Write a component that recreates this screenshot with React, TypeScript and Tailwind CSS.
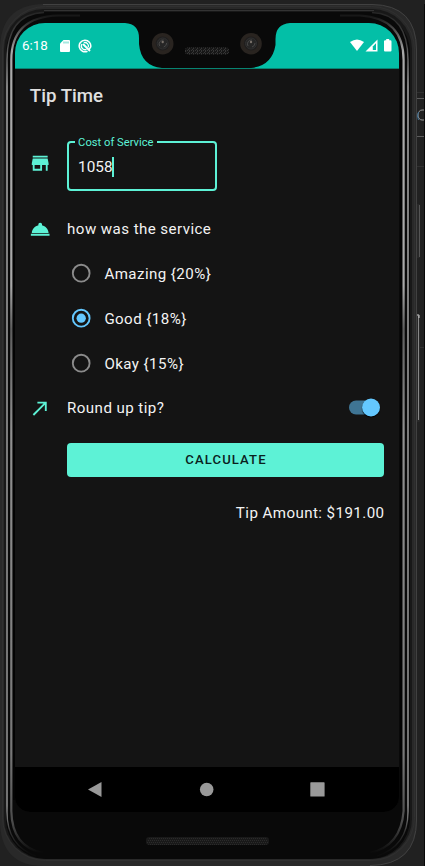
import { useState } from "react";

const ICONS = {
  store: "M20 4H4v2h16V4zm1 10v-2l-1-5H4l-1 5v2h1v6h10v-6h4v6h2v-6h1zm-9 4H6v-4h6v4z",
  service:
    "M2 17h20v2H2zm11.84-9.21A2.006 2.006 0 0 0 12 5a2.006 2.006 0 0 0-1.84 2.79C6.25 8.6 3.27 11.93 3 16h18c-.27-4.07-3.25-7.4-7.16-8.21z",
  arrow: "M9 5v2h6.59L4 18.59 5.41 20 17 8.41V15h2V5z",
};

function RowIcon({ path }: { path: string }) {
  return (
    <svg viewBox="0 0 24 24" className="-ml-[0.8px] mr-[15.5px] size-[22.4px] shrink-0 fill-[#5df2d6]">
      <path d={path} />
    </svg>
  );
}

function DeviceFrame() {
  return (
    <svg viewBox="0 0 425 866" className="absolute inset-0 h-full w-full" fill="none">
      <defs>
        <linearGradient id="shineLeft" x1="0" y1="0" x2="0" y2="866" gradientUnits="userSpaceOnUse">
          <stop offset="0" stopColor="#090909" />
          <stop offset=".02" stopColor="#1a1a1a" />
          <stop offset=".06" stopColor="#aaa" />
          <stop offset=".33" stopColor="#a8a8a8" />
          <stop offset=".38" stopColor="#5e5e5e" />
          <stop offset=".5" stopColor="#909090" />
          <stop offset=".87" stopColor="#777" />
          <stop offset=".95" stopColor="#4a4a4a" />
          <stop offset=".985" stopColor="#090909" />
        </linearGradient>
        <linearGradient id="shineOuter" x1="0" y1="0" x2="0" y2="866" gradientUnits="userSpaceOnUse">
          <stop offset="0" stopColor="#1a1a1a" />
          <stop offset=".05" stopColor="#444" />
          <stop offset=".1" stopColor="#c4c4c4" />
          <stop offset=".93" stopColor="#aaa" />
          <stop offset=".96" stopColor="#333" />
          <stop offset=".985" stopColor="#0c0c0c" />
        </linearGradient>
        <pattern id="mesh" width="4" height="4" patternUnits="userSpaceOnUse">
          <path d="M0 0h1v1H0zM2 0h1v1H2zM1 2h1v1H1zM3 2h1v1H3z" fill="#2b2b2b" />
        </pattern>
      </defs>

      {/* window behind the device */}
      <path d="M417 92.5h7M417 166.5h7M417 347.5h7" stroke="#303030" />
      <path d="M417 98.5h7M417 136.5h7" stroke="#5c5c5c" />
      <path d="M424 110h-2a4 5 0 0 0 0 10h2" stroke="#9b9b9b" />
      <path d="M418.5 112l-1 4 1 4" stroke="#3e6f93" />
      <path d="M424.5 4v862" stroke="#080808" />

      {/* hardware keys */}
      <rect x="416" y="204" width="4" height="54" rx="1" fill="#292929" />
      <path d="M419.5 205v52" stroke="#555" />
      <rect x="416" y="314" width="4" height="108" rx="1" fill="#292929" />
      <path d="M418.5 316v104" stroke="#888" />
      <path d="M417 315h2v3" stroke="#ccc" />

      {/* body */}
      <path
        d="M43 4H372Q417 5 417 50V820Q417 865 370 866H44Q0 866 0 820V50Q0 5 43 4Z"
        fill="#292929"
      />
      <path d="M43 4.5H372Q416.5 5 416.5 50V820Q416.5 865 370 865.5" stroke="#414141" />
      <rect x="2.5" y="6.500" width="412" height="854" rx="43" stroke="#303030" />
      <rect x="4" y="9" width="408" height="850" rx="40" fill="#181818" />
      <path d="M44 10.5H374" stroke="#333" />
      <rect x="6" y="12" width="404" height="847" rx="40" fill="#090909" />
      <path
        d="M44 12.5Q7 14 7 60V812Q7 846 36 856M372 12.5Q408 14 408 60V812Q408 846 377 856"
        stroke="url(#shineOuter)"
        strokeWidth="1.3"
      />
      <path
        d="M80 15.500H58Q11.3 17 11.3 60V811Q12 847 43 853M340 15.500H360Q403.6 18 403.6 60V811Q401 846 370 853"
        stroke="url(#shineLeft)"
        strokeWidth="2.2"
      />
      <path d="M14 60V800M401 60V800" stroke="#030303" strokeWidth="2" />
      <rect x="146" y="837" width="123" height="8" rx="3" fill="#191919" />
      <rect x="147" y="838" width="121" height="7" rx="3" fill="url(#mesh)" />
    </svg>
  );
}

function Notch() {
  return (
    <svg viewBox="0 0 384 46" className="absolute left-0 top-0 h-[46px] w-[384px]">
      <defs>
        <pattern id="grille" width="4" height="3" patternUnits="userSpaceOnUse">
          <path d="M0 0h1v1H0zM2 0h1v2H2zM1 2h1v1H1z" fill="#363636" />
        </pattern>
      </defs>
      <path
        d="M110 0Q124 1 124 15V21Q126 43 147 45H236Q257 43 260.500 22V16Q260.500 1 275 0Z"
        fill="#090909"
      />
      {[147.700, 236].map((x) => (
        <g key={x}>
          <circle cx={x} cy="20.700" r="10.800" fill="#292420" />
          <circle cx={x} cy="20.500" r="7" fill="#1f1e1e" />
          <circle cx={x} cy="20.500" r="5.500" fill="#262626" stroke="#303030" />
          <path d={`M${x - 3} 23a4 4 0 0 1 4-6M${x + 1} 24q3-1 3-4`} stroke="#484848" fill="none" />
          <circle cx={x} cy="19" r="1.200" fill="#777069" />
        </g>
      ))}
      <rect x="170" y="24.500" width="44" height="7" rx="3" fill="#171717" />
      <rect x="170" y="24.500" width="44" height="7" rx="3" fill="url(#grille)" />
    </svg>
  );
}

function StatusBar() {
  return (
    <header className="relative flex h-[46px] items-center justify-between border-b border-[#078472] bg-[#03bfa7] pl-[7px] pr-[7px]">
      <Notch />
      <div className="flex items-center text-[13.4px] text-white">
        <span className="w-[37.5px] pt-px leading-none">6:18</span>
        <svg viewBox="0 0 10 12" className="h-[12px] w-[10px]">
          <path d="M3.500 0H9q1 0 1 1v10q0 1-1 1H1q-1 0-1-1V3.500Z" fill="#fff" />
          <path d="M4 1.500v2M6 1.500v2M8 1.500v2" stroke="#03bfa7" strokeWidth=".7" />
        </svg>
        <svg viewBox="0 0 14 14" className="ml-[8px] size-[14px]" fill="none" stroke="#fff">
          <path d="M9.500 12.200A5.800 5.800 0 1 1 12.700 8L11 10.500" strokeWidth="1.500" />
          <path d="M8.500 10.300A3.600 3.600 0 0 1 4 5M5.800 3.700A3.600 3.600 0 0 1 10.300 8.200" strokeWidth="1.300" />
          <path d="M5 5L12 12" strokeWidth="1.900" />
        </svg>
      </div>
      <svg viewBox="0 0 42 13" className="h-[13px] w-[42px]" fill="#fff">
        <path d="M0 3Q7-2.200 14 3L7 12Z" />
        <path d="M15.500 12.500L27.500 .5V12.500Z" />
        <path d="M22.800 7.500L26 4.200V11H22.800Z" fill="#03bfa7" />
        <path d="M36.200 0h3v1.300h1q1.300 0 1.300 1.200v9q0 1-1 1h-5.500q-1 0-1-1v-9q0-1.200 1.200-1.200h1Z" />
      </svg>
    </header>
  );
}

export default function App() {
  const [cost, setCost] = useState("1058");
  const [rating, setRating] = useState(1);
  const [roundUp, setRoundUp] = useState(true);
  const options = ["Amazing {20%}", "Good {18%}", "Okay {15%}"];

  return (
    <div className="relative h-[866px] w-[425px] overflow-hidden bg-[#212121] pl-[15px] pt-[23px] font-['Roboto',sans-serif]">
      <DeviceFrame />
      <main className="relative flex h-[789px] w-[384px] flex-col overflow-hidden rounded-b-[15px] rounded-t-[30px] bg-[#141414] text-[15.1px] tracking-[0.43px] text-[#f3f3f3]">
        <div className="tracking-normal">
          <StatusBar />
        </div>
        <h1 className="flex h-[52px] items-center pl-[14.8px] pt-[2px] text-[18.68px] font-medium tracking-normal text-[#e0e0e0]">
          Tip Time
        </h1>

        <section className="flex grow flex-col px-[15px] pt-[15px]">
          <div className="flex h-[55px] items-center">
            <RowIcon path={ICONS.store} />
            <fieldset className="h-[55px] w-[150px] rounded-[4px] border-2 border-[#5df2d6] pl-[6px]">
              <legend className="h-[11px] px-[3px] text-[11.2px] leading-[13px] tracking-[0.01px] text-[#5df2d6]">
                <span className="block w-[76px] whitespace-nowrap">Cost of Service</span>
              </legend>
              <label className="flex h-[40px] items-center pl-[3px]">
                <input
                  aria-label="Cost of Service"
                  className="w-[35px] bg-transparent text-[15.3px] tracking-normal outline-none"
                  value={cost}
                  onChange={(e) => setCost(e.target.value)}
                />
                <span className="-ml-px -mt-px h-[20px] w-[2px] bg-[#5df2d6]" />
              </label>
            </fieldset>
          </div>

          <div className="mt-[15.6px] flex h-[44.8px] items-center">
            <RowIcon path={ICONS.service} />
            how was the service
          </div>

          <div className="pl-[37px]">
            {options.map((label, i) => (
              <button key={label} onClick={() => setRating(i)} className="flex h-[44.800px] items-center">
                <svg viewBox="0 0 24 24" className="-mt-px ml-[3.200px] mr-[11.800px] size-[22.400px]">
                  <circle
                    cx="12"
                    cy="12"
                    r="9"
                    fill="none"
                    strokeWidth="2"
                    className={rating === i ? "stroke-[#64c8ff]" : "stroke-[#8b8b8b]"}
                  />
                  {rating === i && <circle cx="12" cy="12" r="5" fill="#64c8ff" />}
                </svg>
                <span className="pt-px">{label}</span>
              </button>
            ))}
          </div>

          <div className="flex h-[44.800px] items-center">
            <RowIcon path={ICONS.arrow} />
            <span className="grow">Round up tip?</span>
            <button
              aria-label="Round up tip"
              onClick={() => setRoundUp(!roundUp)}
              className={`mr-[4px] flex h-[13.500px] w-[31px] -translate-y-[0.500px] items-center rounded-full bg-[#3f7594] ${
                roundUp ? "justify-end" : "justify-start"
              }`}
            >
              <span className="size-[18.5px] shrink-0 rounded-full bg-[#64c8ff] shadow-[0_1px_1px_#000]" />
            </button>
          </div>

          <button className="ml-[37px] mt-[12px] h-[34px] shrink-0 rounded-[4px] bg-[#5df2d6] pl-px pt-px text-[13.080px] font-medium tracking-[1.120px] text-[#0a211d]">
            CALCULATE
          </button>
          <p className="-mr-[0.5px] mt-[24px] text-right leading-[24px]">Tip Amount: $191.00</p>
        </section>

        <nav className="flex h-[45px] shrink-0 items-center bg-black">
          <svg viewBox="0 0 384 45" className="h-[45px] w-full fill-[#999]">
            <path d="M73 22.500L86.500 15V30Z" />
            <circle cx="191.700" cy="22.500" r="6.800" />
            <rect x="295.300" y="15.300" width="14.300" height="14.300" rx=".6" />
          </svg>
        </nav>
      </main>
    </div>
  );
}
